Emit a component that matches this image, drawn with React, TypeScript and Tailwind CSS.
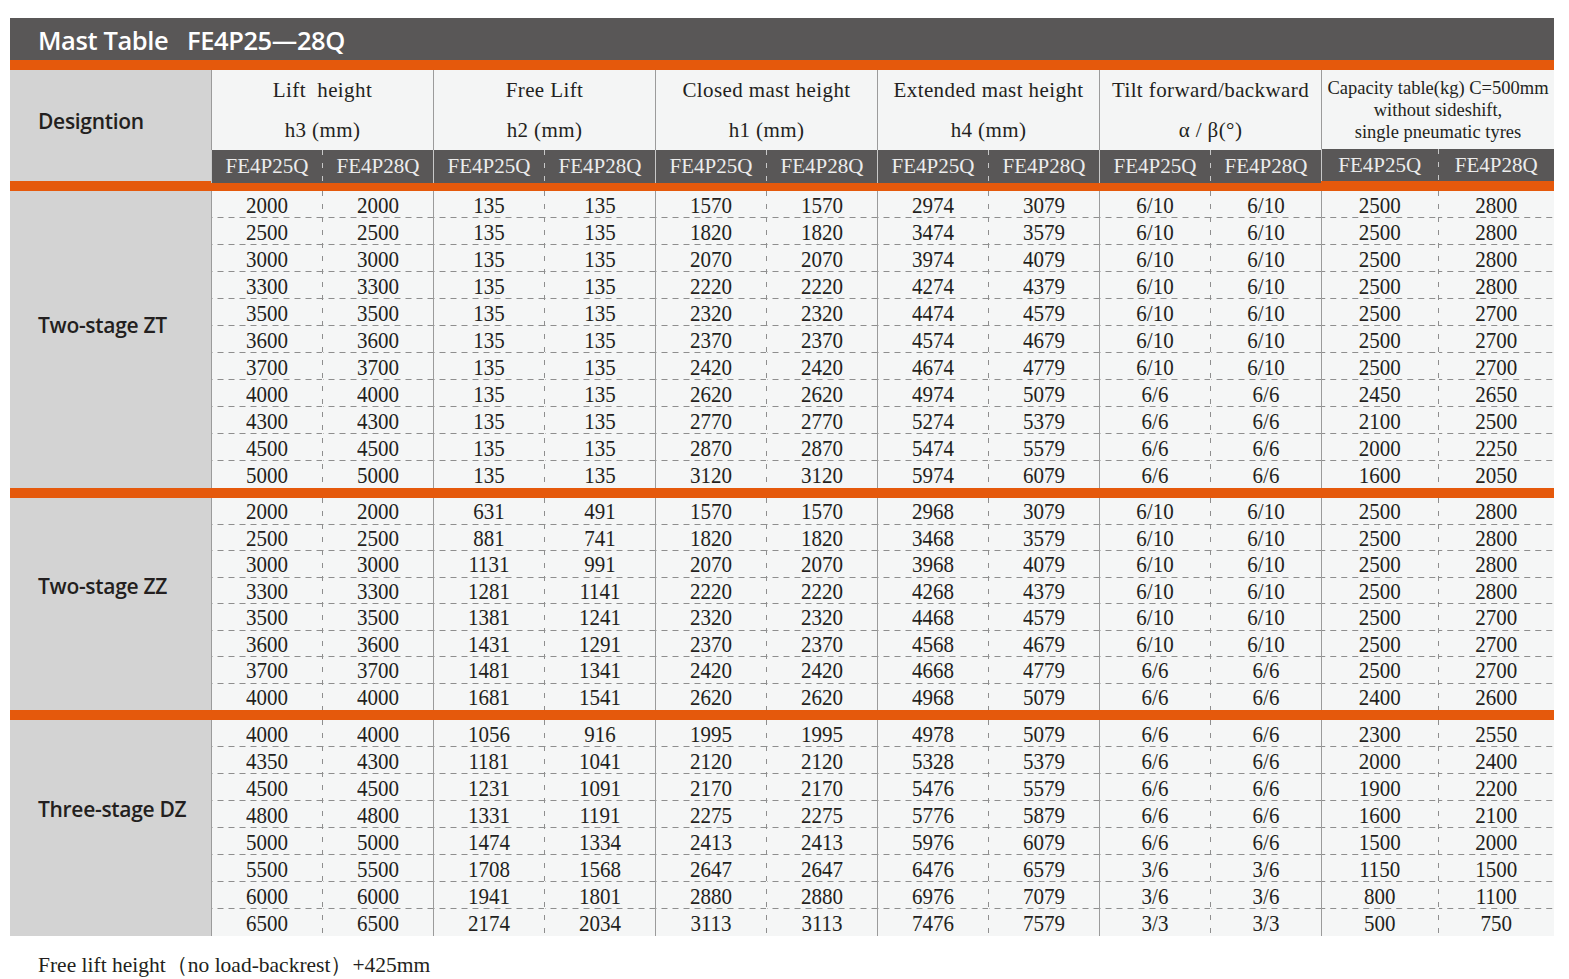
import React from "react";

const SERIF = "font-['Liberation_Serif','Times_New_Roman',serif]";
const SANS = "font-['Open_Sans','Noto_Sans',sans-serif]";

type Col = [string[], string[]];

const rep = (v: string, n: number) => Array.from({ length: n }, () => v);

const s1: Col[] = (() => {
  const h3 = ["2000", "2500", "3000", "3300", "3500", "3600", "3700", "4000", "4300", "4500", "5000"];
  const h2 = rep("135", 11);
  const h1 = ["1570", "1820", "2070", "2220", "2320", "2370", "2420", "2620", "2770", "2870", "3120"];
  const h4a = ["2974", "3474", "3974", "4274", "4474", "4574", "4674", "4974", "5274", "5474", "5974"];
  const h4b = ["3079", "3579", "4079", "4379", "4579", "4679", "4779", "5079", "5379", "5579", "6079"];
  const tilt = [...rep("6/10", 7), ...rep("6/6", 4)];
  const ca = [...rep("2500", 7), "2450", "2100", "2000", "1600"];
  const cb = ["2800", "2800", "2800", "2800", "2700", "2700", "2700", "2650", "2500", "2250", "2050"];
  return [[h3, h3], [h2, h2], [h1, h1], [h4a, h4b], [tilt, tilt], [ca, cb]];
})();

const s2: Col[] = (() => {
  const h3 = ["2000", "2500", "3000", "3300", "3500", "3600", "3700", "4000"];
  const h2a = ["631", "881", "1131", "1281", "1381", "1431", "1481", "1681"];
  const h2b = ["491", "741", "991", "1141", "1241", "1291", "1341", "1541"];
  const h1 = ["1570", "1820", "2070", "2220", "2320", "2370", "2420", "2620"];
  const h4a = ["2968", "3468", "3968", "4268", "4468", "4568", "4668", "4968"];
  const h4b = ["3079", "3579", "4079", "4379", "4579", "4679", "4779", "5079"];
  const tilt = [...rep("6/10", 6), ...rep("6/6", 2)];
  const ca = [...rep("2500", 7), "2400"];
  const cb = ["2800", "2800", "2800", "2800", "2700", "2700", "2700", "2600"];
  return [[h3, h3], [h2a, h2b], [h1, h1], [h4a, h4b], [tilt, tilt], [ca, cb]];
})();

const s3: Col[] = (() => {
  const h3a = ["4000", "4350", "4500", "4800", "5000", "5500", "6000", "6500"];
  const h3b = ["4000", "4300", "4500", "4800", "5000", "5500", "6000", "6500"];
  const h2a = ["1056", "1181", "1231", "1331", "1474", "1708", "1941", "2174"];
  const h2b = ["916", "1041", "1091", "1191", "1334", "1568", "1801", "2034"];
  const h1 = ["1995", "2120", "2170", "2275", "2413", "2647", "2880", "3113"];
  const h4a = ["4978", "5328", "5476", "5776", "5976", "6476", "6976", "7476"];
  const h4b = ["5079", "5379", "5579", "5879", "6079", "6579", "7079", "7579"];
  const tilt = [...rep("6/6", 5), "3/6", "3/6", "3/3"];
  const ca = ["2300", "2000", "1900", "1600", "1500", "1150", "800", "500"];
  const cb = ["2550", "2400", "2200", "2100", "2000", "1500", "1100", "750"];
  return [[h3a, h3b], [h2a, h2b], [h1, h1], [h4a, h4b], [tilt, tilt], [ca, cb]];
})();

const headers: string[][] = [
  ["Lift\u00a0\u00a0height", "h3 (mm)"],
  ["Free Lift", "h2 (mm)"],
  ["Closed mast height", "h1 (mm)"],
  ["Extended mast height", "h4 (mm)"],
  ["Tilt forward/backward", "α / β(°)"],
  ["Capacity table(kg) C=500mm", "without sideshift,", "single pneumatic tyres"],
];

const groupW = (i: number) => (i === 5 ? "flex-1" : "w-[222px]");

function SubCol({ values, rowH }: { values: string[]; rowH: string }) {
  return (
    <div className="flex-1 flex flex-col">
      {values.map((v, i) => (
        <div
          key={i}
          className={`${rowH} flex items-center justify-center text-[21px] leading-none text-[#231f20] ${
            i < values.length - 1
              ? "bg-[linear-gradient(to_right,#8e8e8e_6px,transparent_6px)] bg-[length:11px_1px] bg-repeat-x bg-bottom"
              : ""
          }`}
        >
          <span className="pt-[1px] scale-y-[1.08]">{v}</span>
        </div>
      ))}
    </div>
  );
}

function Section({ label, cols, rowH, pb }: { label: string; cols: Col[]; rowH: string; pb: string }) {
  return (
    <div className="flex">
      <div className={`w-[201px] shrink-0 bg-[#d3d3d3] flex items-center pl-[28px] ${pb}`}>
        <span className={`${SANS} text-[21px] font-semibold tracking-[-0.3px] text-[#231f20]`}>{label}</span>
      </div>
      <div className={`flex flex-1 bg-[#f5f6f6] ${SERIF}`}>
        {cols.map((c, gi) => (
          <div key={gi} className={`${groupW(gi)} flex border-l border-[#9b9b9b]`}>
            <SubCol values={c[0]} rowH={rowH} />
            <div className="w-px bg-[linear-gradient(to_bottom,#8e8e8e_5px,transparent_5px)] bg-[length:1px_13px] bg-repeat-y" />
            <SubCol values={c[1]} rowH={rowH} />
          </div>
        ))}
      </div>
    </div>
  );
}

const Orange = ({ h }: { h: string }) => <div className={`${h} bg-[#e5590c]`} />;

export default function App() {
  return (
    <div className="w-[1569px] h-[979px] bg-white pt-[18px] pl-[10px] overflow-hidden">
      <div className="w-[1544px]">
        <div className="h-[42px] bg-[#595757] flex items-center pl-[28px]">
          <span className={`${SANS} text-[25.5px] font-semibold text-white tracking-[-0.4px] pt-[2px]`}>
            Mast Table&nbsp;&nbsp;&nbsp;FE4P25—28Q
          </span>
        </div>
        <Orange h="h-[10px]" />
        <div className="flex h-[111px]">
          <div className="w-[201px] shrink-0 bg-[#d3d3d3] flex items-center pl-[28px] pb-[8px]">
            <span className={`${SANS} text-[21px] font-semibold tracking-[-0.3px] text-[#231f20]`}>Designtion</span>
          </div>
          <div className={`flex flex-1 ${SERIF}`}>
            {headers.map((h, gi) => (
              <div key={gi} className={`${groupW(gi)} flex flex-col`}>
                <div
                  className={`h-[80px] bg-[#f4f5f5] border-l border-[#9b9b9b] flex flex-col items-center justify-center text-[#231f20] ${
                    h.length === 3 ? "text-[18.5px] leading-[22px] pt-[2px]" : "text-[21px] leading-[40px] tracking-[0.4px]"
                  }`}
                >
                  {h.map((t, i) => (
                    <div key={i} className="whitespace-nowrap">
                      {t}
                    </div>
                  ))}
                </div>
                <div className="flex-1 bg-[#595757] border-l border-[#c8c8c8] flex text-[21px] text-[#ececec]">
                  <div className="flex-1 flex items-center justify-center pt-[1px]">FE4P25Q</div>
                  <div className="w-px bg-[linear-gradient(to_bottom,#c8c8c8_5px,transparent_5px)] bg-[length:1px_13px] bg-repeat-y" />
                  <div className="flex-1 flex items-center justify-center pt-[1px]">FE4P28Q</div>
                </div>
              </div>
            ))}
          </div>
        </div>
        <Orange h="h-[10px]" />
        <Section label="Two-stage ZT" cols={s1} rowH="h-[27px]" pb="pb-[27px]" />
        <Orange h="h-[10px]" />
        <Section label="Two-stage ZZ" cols={s2} rowH="h-[26.5px]" pb="pb-[34px]" />
        <Orange h="h-[10px]" />
        <Section label="Three-stage DZ" cols={s3} rowH="h-[27px]" pb="pb-[36px]" />
        <div className={`${SERIF} text-[21.5px] text-[#231f20] pl-[28px] mt-[13px]`}>
          Free lift height（no load-backrest）+425mm
        </div>
      </div>
    </div>
  );
}
